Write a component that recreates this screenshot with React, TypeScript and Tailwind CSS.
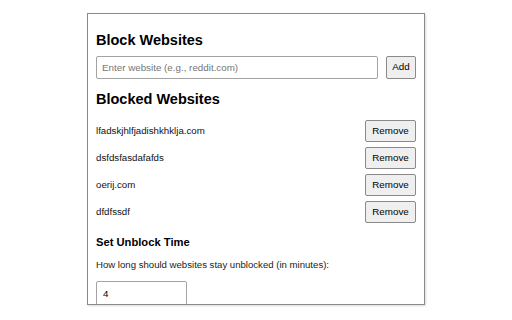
export default function App() {
  const sites = ["lfadskjhlfjadishkhklja.com", "dsfdsfasdafafds", "oerij.com", "dfdfssdf"];

  return (
    <div className="h-[320px] w-[512px] bg-white pt-[13px] font-['Liberation_Sans',Arial,sans-serif] text-black">
      <div className="ml-[87px] h-[292px] w-[338px] overflow-hidden border border-[#8a8a8a] px-2 pt-[18px] shadow-[1px_1px_2px_rgba(0,0,0,0.15)]">
        <h2 className="text-[14.5px] font-bold leading-[17px]">Block Websites</h2>
        <div className="mt-[7px] flex items-center gap-2">
          <input
            className="h-[23px] w-[282px] rounded-[2px] border border-[#a3a3a3] px-[5px] text-[9.8px] outline-none placeholder:text-[#757575]"
            placeholder="Enter website (e.g., reddit.com)"
          />
          <button className="h-[23px] w-[30px] rounded-[2px] border border-[#8a8a8a] bg-[#efefef] text-[9.8px]">
            Add
          </button>
        </div>

        <h2 className="mt-[12px] text-[14.5px] font-bold leading-[17px]">Blocked Websites</h2>
        <ul className="mt-[12px] flex flex-col gap-[5px]">
          {sites.map((s) => (
            <li key={s} className="flex h-[22px] items-center justify-between">
              <span className="text-[9.7px] text-[#111]">{s}</span>
              <button className="h-[22px] w-[51px] rounded-[2px] border border-[#8a8a8a] bg-[#efefef] text-[9.8px]">
                Remove
              </button>
            </li>
          ))}
        </ul>

        <h3 className="mt-[12px] text-[11.2px] font-bold leading-[14px]">Set Unblock Time</h3>
        <p className="mt-[10px] text-[9.6px] leading-[12px] text-[#222]">
          How long should websites stay unblocked (in minutes):
        </p>
        <input
          type="number"
          defaultValue={4}
          className="mt-[10px] h-[28px] w-[91px] rounded-[2px] border border-[#a3a3a3] px-[6px] pb-[4px] text-[9.8px] outline-none"
        />
      </div>
    </div>
  );
}
